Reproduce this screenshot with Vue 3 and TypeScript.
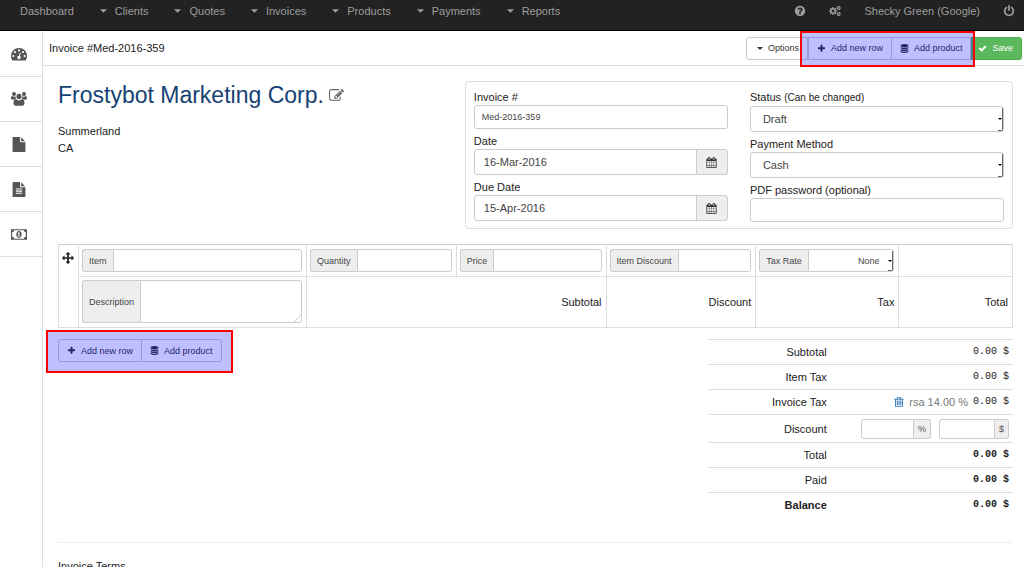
<script setup lang="ts">
import { h, ref } from 'vue'

function gear(cx: number, cy: number, outer: number, teeth: number, hole: number): string {
  const inner = outer * 0.76
  const step = (Math.PI * 2) / teeth
  const at = (radius: number, angle: number): string =>
    `${(cx + radius * Math.cos(angle)).toFixed(2)} ${(cy + radius * Math.sin(angle)).toFixed(2)}`
  const points: string[] = []
  for (let i = 0; i < teeth; i++) {
    const a = i * step
    points.push(at(inner, a - step * 0.28), at(outer, a - step * 0.18), at(outer, a + step * 0.18), at(inner, a + step * 0.28))
  }
  return `M${points.join('L')}Z` + disc(cx, cy, hole)
}

function disc(cx: number, cy: number, r: number): string {
  return `M${cx - r} ${cy}a${r} ${r} 0 1 0 ${2 * r} 0a${r} ${r} 0 1 0 ${-2 * r} 0z`
}

interface Glyph { box: string; d: string }

const glyphs: Record<string, Glyph> = {
  help: { box: '0 0 1792 1792', d: 'M1024 1376v-192q0-14-9-23t-23-9h-192q-14 0-23 9t-9 23v192q0 14 9 23t23 9h192q14 0 23-9t9-23zm256-672q0-88-55.5-163t-138.5-116-170-41q-243 0-371 213-15 24 8 42l132 100q7 6 19 6 16 0 25-12 53-68 86-92 34-24 86-24 48 0 85.5 26t37.5 59q0 38-20 61t-68 45q-63 28-115.5 86.5t-52.5 125.5v36q0 14 9 23t23 9h192q14 0 23-9t9-23q0-19 21.5-49.5t54.5-49.5q32-18 49-28.5t46-35 44.5-48 28-60.5 12.5-81zm384 192q0 209-103 385.5t-279.5 279.5-385.5 103-385.5-103-279.5-279.5-103-385.5 103-385.5 279.5-279.5 385.5-103 385.5 103 279.5 279.5 103 385.5z' },
  power: { box: '0 0 1792 1792', d: 'M1664 896q0 156-61 298t-164 245-245 164-298 61-298-61-245-164-164-245-61-298q0-182 80.5-343t226.5-270q43-32 95.5-25t83.5 50q32 42 24.5 94.5t-49.5 84.5q-98 74-151.5 181t-53.5 228q0 104 40.5 198.5t109.5 163.5 163.5 109.5 198.5 40.5 198.5-40.5 163.5-109.5 109.5-163.5 40.5-198.5q0-121-53.5-228t-151.5-181q-42-32-49.5-84.5t24.5-94.5q31-43 84-50t95 25q146 109 226.5 270t80.5 343zm-640-768v640q0 52-38 90t-90 38-90-38-38-90v-640q0-52 38-90t90-38 90 38 38 90z' },
  plus: { box: '0 0 1792 1792', d: 'M1600 736v192q0 40-28 68t-68 28h-416v416q0 40-28 68t-68 28h-192q-40 0-68-28t-28-68v-416h-416q-40 0-68-28t-28-68v-192q0-40 28-68t68-28h416v-416q0-40 28-68t68-28h192q40 0 68 28t28 68v416h416q40 0 68 28t28 68z' },
  check: { box: '0 0 1792 1792', d: 'M1671 566q0 40-28 68l-724 724-136 136q-28 28-68 28t-68-28l-136-136-362-362q-28-28-28-68t28-68l136-136q28-28 68-28t68 28l294 295 656-657q28-28 68-28t68 28l136 136q28 28 28 68z' },
  database: { box: '0 0 1792 1792', d: 'M896 768q237 0 443-43t325-127v170q0 69-103 128t-280 93.5-385 34.5-385-34.5-280-93.5-103-128v-170q119 84 325 127t443 43zm0 768q237 0 443-43t325-127v170q0 69-103 128t-280 93.5-385 34.5-385-34.5-280-93.5-103-128v-170q119 84 325 127t443 43zm0-384q237 0 443-43t325-127v170q0 69-103 128t-280 93.5-385 34.5-385-34.5-280-93.5-103-128v-170q119 84 325 127t443 43zm0-1152q208 0 385 34.5t280 93.5 103 128v128q0 69-103 128t-280 93.5-385 34.5-385-34.5-280-93.5-103-128v-128q0-69 103-128t280-93.5 385-34.5z' },
  arrows: { box: '0 0 1792 1792', d: 'M1792 896q0 26-19 45l-256 256q-19 19-45 19t-45-19-19-45v-128h-384v384h128q26 0 45 19t19 45-19 45l-256 256q-19 19-45 19t-45-19l-256-256q-19-19-19-45t19-45 45-19h128v-384h-384v128q0 26-19 45t-45 19-45-19l-256-256q-19-19-19-45t19-45l256-256q19-19 45-19t45 19 19 45v128h384v-384h-128q-26 0-45-19t-19-45 19-45l256-256q19-19 45-19t45 19l256 256q19 19 19 45t-19 45-45 19h-128v384h384v-128q0-26 19-45t45-19 45 19l256 256q19 19 19 45z' },
  calendar: { box: '0 0 1792 1792', d: 'M192 1664h288v-288h-288v288zm352 0h320v-288h-320v288zm-352-352h288v-320h-288v320zm352 0h320v-320h-320v320zm-352-384h288v-288h-288v288zm736 736h320v-288h-320v288zm-384-736h320v-288h-320v288zm768 736h288v-288h-288v288zm-384-352h320v-320h-320v320zm-352-864v-288q0-13-9.5-22.5t-22.5-9.5h-64q-13 0-22.5 9.5t-9.5 22.5v288q0 13 9.5 22.5t22.5 9.5h64q13 0 22.5-9.5t9.5-22.5zm736 864h288v-320h-288v320zm-384-384h320v-288h-320v288zm384 0h288v-288h-288v288zm32-480v-288q0-13-9.5-22.5t-22.5-9.5h-64q-13 0-22.5 9.5t-9.5 22.5v288q0 13 9.5 22.5t22.5 9.5h64q13 0 22.5-9.5t9.5-22.5zm384-64v1280q0 52-38 90t-90 38h-1408q-52 0-90-38t-38-90v-1280q0-52 38-90t90-38h128v-96q0-66 47-113t113-47h64q66 0 113 47t47 113v96h384v-96q0-66 47-113t113-47h64q66 0 113 47t47 113v96h128q52 0 90 38t38 90z' },
  edit: { box: '0 0 1792 1792', d: 'M888 1184l116-116-152-152-116 116v56h96v96h56zm440-720q-16-16-33 1l-350 350q-17 17-1 33t33-1l350-350q17-17 1-33zm80 594v190q0 119-84.5 203.5t-203.5 84.5h-832q-119 0-203.5-84.5t-84.5-203.5v-832q0-119 84.5-203.5t203.5-84.5h832q63 0 117 25 15 7 18 23 3 17-9 29l-49 49q-14 14-32 8-23-6-45-6h-832q-66 0-113 47t-47 113v832q0 66 47 113t113 47h832q66 0 113-47t47-113v-126q0-13 9-22l64-64q15-15 35-7t20 29zm-96-738l288 288-672 672h-288v-288zm444 132l-92 92-288-288 92-92q28-28 68-28t68 28l152 152q28 28 28 68t-28 68z' },
  file: { box: '0 0 1792 1792', d: 'M1152 512v-472q22 14 36 28l408 408q14 14 28 36h-472zm-128 32q0 40 28 68t68 28h544v1056q0 40-28 68t-68 28h-1344q-40 0-68-28t-28-68v-1600q0-40 28-68t68-28h800v544z' },
  fileText: { box: '0 0 1792 1792', d: 'M1596 476q14 14 28 36h-472v-472q22 14 36 28zm-476 164h544v1056q0 40-28 68t-68 28h-1344q-40 0-68-28t-28-68v-1600q0-40 28-68t68-28h800v544q0 40 28 68t68 28zm160 736v-64q0-14-9-23t-23-9h-704q-14 0-23 9t-9 23v64q0 14 9 23t23 9h704q14 0 23-9t9-23zm0-256v-64q0-14-9-23t-23-9h-704q-14 0-23 9t-9 23v64q0 14 9 23t23 9h704q14 0 23-9t9-23zm0-256v-64q0-14-9-23t-23-9h-704q-14 0-23 9t-9 23v64q0 14 9 23t23 9h704q14 0 23-9t9-23z' },
  dashboard: { box: '0 0 16 16', d: 'M8 2a8 8 0 0 0-8 8c0 1.600.5 3 1.200 4.200.2.3.4.4.7.4h12.200c.3 0 .5-.1.7-.4A8 8 0 0 0 8 2z' + disc(2.3, 10, 1.1) + disc(4, 6, 1.1) + disc(8, 4.3, 1.1) + disc(12, 6, 1.1) + disc(13.7, 10, 1.1) + 'M8.900 6.500l.9.250-.9 3.300a1.700 1.700 0 1 1-.95-.25z' },
  users: { box: '0 0 16 16', d: disc(8, 5.4, 2.6) + disc(3, 3, 2) + disc(13, 3, 2) + 'M4.900 8.100c.8.9 1.900 1.300 3.100 1.300s2.300-.4 3.100-1.300c1.600.1 2.400 1.700 2.400 4.200 0 1.600-.9 2.500-2.300 2.500H4.800c-1.400 0-2.300-.9-2.300-2.500 0-2.500.8-4.100 2.400-4.200zM1.200 5c.6.5 1.200.7 1.800.7.5 0 1-.1 1.500-.4 0 1 .2 1.600.6 2.300-.9 0-1.700.4-2.300 1.100H1.600C.6 8.700 0 8.200 0 7.300 0 6.100.3 5 1.200 5zM14.800 5c-.6.5-1.200.7-1.800.7-.5 0-1-.1-1.500-.4 0 1-.2 1.600-.6 2.300.9 0 1.700.4 2.300 1.100h1.200c1 0 1.600-.5 1.600-1.400 0-1.200-.3-2.300-1.200-2.300z' },
  money: { box: '0 0 18 12', d: 'M0 0h18v12H0zM3.500 1.300A2.300 2.300 0 0 1 1.300 3.500v5a2.300 2.300 0 0 1 2.200 2.200h11a2.300 2.300 0 0 1 2.200-2.200v-5a2.300 2.300 0 0 1-2.200-2.200zM9 2.200c1.900 0 3 1.700 3 3.800s-1.100 3.800-3 3.800S6 8.100 6 6s1.100-3.800 3-3.800zM8.600 3.600L7.300 4.700l.6.7.5-.4v2.300h-.9v1h3v-1h-.9V3.600z' },
  cogs: { box: '0 0 16 16', d: gear(5.4, 8, 5.4, 8, 2) + gear(13, 4, 3, 6, 1) + gear(13, 12, 3, 6, 1) },
  trash: { box: '0 0 12 12', d: 'M4 0h4l1 2h2.500v1.200H10.700V11c0 .6-.4 1-1 1H2.300c-.6 0-1-.4-1-1V3.200H.5V2H3zM4.700 1l-.4 1h3.400l-.4-1zM2.400 3.200V11h7.200V3.200zM3.300 4.300h1.300v5.700H3.300zM5.400 4.300h1.300v5.700H5.400zM7.500 4.300h1.300v5.700H7.500z' },
  caret: { box: '0 0 8 4', d: 'M0 0h8L4 4z' },
}

const Icon = (props: { name: string }) =>
  h('svg', { viewBox: glyphs[props.name].box, fill: 'currentColor', 'aria-hidden': 'true' }, [
    h('path', { d: glyphs[props.name].d, 'fill-rule': 'evenodd' }),
  ])
Icon.props = ['name']

const menus: string[] = ['Clients', 'Quotes', 'Invoices', 'Products', 'Payments', 'Reports']
const shortcuts: { icon: string; label: string }[] = [
  { icon: 'dashboard', label: 'Dashboard' },
  { icon: 'users', label: 'Clients' },
  { icon: 'file', label: 'Quotes' },
  { icon: 'fileText', label: 'Invoices' },
  { icon: 'money', label: 'Payments' },
]

const invoiceNumber = ref('Med-2016-359')
const invoiceDate = ref('16-Mar-2016')
const dueDate = ref('15-Apr-2016')
const status = ref('Draft')
const method = ref('Cash')
const taxRate = ref('None')
</script>

<template>
  <div class="page">
    <nav class="topbar">
      <a href="#" class="nav-link">Dashboard</a>
      <a v-for="menu in menus" :key="menu" href="#" class="nav-link">
        <Icon name="caret" class="nav-caret" />{{ menu }}
      </a>
      <div class="account">
        <a href="#" class="nav-link" aria-label="Help"><Icon name="help" class="icon-nav" /></a>
        <a href="#" class="nav-link" aria-label="Settings"><Icon name="cogs" class="icon-nav" /></a>
        <a href="#" class="nav-link">Shecky Green (Google)</a>
        <a href="#" class="nav-link" aria-label="Log out"><Icon name="power" class="icon-nav" /></a>
      </div>
    </nav>

    <div class="body">
      <aside class="sidebar">
        <a v-for="item in shortcuts" :key="item.icon" href="#" class="side-link" :aria-label="item.label">
          <Icon :name="item.icon" :class="['side-icon', item.icon]" />
        </a>
      </aside>

      <main class="main">
        <header class="toolbar">
          <h1 class="page-title">Invoice #Med-2016-359</h1>
          <div class="actions">
            <button type="button" class="btn options"><Icon name="caret" class="btn-caret" />Options</button>
            <div class="group top-group">
              <button type="button" class="btn"><Icon name="plus" class="btn-icon" />Add new row</button>
              <button type="button" class="btn"><Icon name="database" class="btn-icon" />Add product</button>
              <span class="highlight"></span>
            </div>
            <button type="button" class="btn save"><Icon name="check" class="btn-icon" />Save</button>
          </div>
        </header>

        <div class="content">
          <section class="summary">
            <div class="client">
              <h2 class="client-name">
                <a href="#">Frostybot Marketing Corp.</a>
                <button type="button" class="edit" aria-label="Edit client"><Icon name="edit" class="edit-icon" /></button>
              </h2>
              <address>Summerland<br />CA</address>
            </div>

            <div class="panel">
              <div class="column">
                <div class="field">
                  <label for="number">Invoice #</label>
                  <input id="number" v-model="invoiceNumber" class="control small" type="text" />
                </div>
                <div class="field">
                  <label for="date">Date</label>
                  <div class="date-group">
                    <input id="date" v-model="invoiceDate" class="control" type="text" />
                    <button type="button" class="date-button" aria-label="Pick date"><Icon name="calendar" class="calendar" /></button>
                  </div>
                </div>
                <div class="field">
                  <label for="due">Due Date</label>
                  <div class="date-group">
                    <input id="due" v-model="dueDate" class="control" type="text" />
                    <button type="button" class="date-button" aria-label="Pick due date"><Icon name="calendar" class="calendar" /></button>
                  </div>
                </div>
              </div>
              <div class="column">
                <div class="field">
                  <label for="status">Status <small>(Can be changed)</small></label>
                  <div class="picker">
                    <select id="status" v-model="status" class="control"><option>Draft</option><option>Sent</option></select>
                  </div>
                </div>
                <div class="field">
                  <label for="method">Payment Method</label>
                  <div class="picker">
                    <select id="method" v-model="method" class="control"><option>Cash</option><option>Credit Card</option></select>
                  </div>
                </div>
                <div class="field">
                  <label for="password">PDF password (optional)</label>
                  <input id="password" class="control small" type="text" />
                </div>
              </div>
            </div>
          </section>

          <table class="items">
            <colgroup>
              <col class="c-move" /><col class="c-item" /><col class="c-mid" /><col class="c-mid" /><col class="c-mid" /><col class="c-tax" /><col />
            </colgroup>
            <tbody>
              <tr>
                <td rowspan="2" class="move"><Icon name="arrows" class="move-icon" /></td>
                <td><div class="addon-group"><label for="item">Item</label><input id="item" type="text" /></div></td>
                <td><div class="addon-group"><label for="qty">Quantity</label><input id="qty" type="text" /></div></td>
                <td><div class="addon-group"><label for="price">Price</label><input id="price" type="text" /></div></td>
                <td><div class="addon-group"><label for="idisc">Item Discount</label><input id="idisc" type="text" /></div></td>
                <td>
                  <div class="addon-group">
                    <label for="rate">Tax Rate</label>
                    <div class="picker">
                      <select id="rate" v-model="taxRate"><option>None</option><option>rsa</option></select>
                    </div>
                  </div>
                </td>
                <td></td>
              </tr>
              <tr>
                <td><div class="addon-group tall"><label for="desc">Description</label><textarea id="desc"></textarea></div></td>
                <td colspan="2" class="amount">Subtotal</td>
                <td class="amount">Discount</td>
                <td class="amount">Tax</td>
                <td class="amount">Total</td>
              </tr>
            </tbody>
          </table>

          <section class="footer">
            <div class="group bottom-group">
              <button type="button" class="btn"><Icon name="plus" class="btn-icon" />Add new row</button>
              <button type="button" class="btn"><Icon name="database" class="btn-icon" />Add product</button>
              <span class="highlight"></span>
            </div>

            <table class="totals">
              <tbody>
                <tr><th scope="row">Subtotal</th><td class="mono">0.00 $</td></tr>
                <tr><th scope="row">Item Tax</th><td class="mono">0.00 $</td></tr>
                <tr>
                  <th scope="row">Invoice Tax</th>
                  <td>
                    <div class="tax-line">
                      <button type="button" class="trash" aria-label="Remove tax"><Icon name="trash" class="trash-icon" /></button>
                      <span class="muted">rsa 14.00 %</span>
                      <span class="mono">0.00 $</span>
                    </div>
                  </td>
                </tr>
                <tr class="discount-row">
                  <th scope="row">Discount</th>
                  <td>
                    <div class="discounts">
                      <div class="unit-group"><input id="dpct" type="text" /><label for="dpct">%</label></div>
                      <div class="unit-group"><input id="damt" type="text" /><label for="damt">$</label></div>
                    </div>
                  </td>
                </tr>
                <tr><th scope="row">Total</th><td class="mono strong">0.00 $</td></tr>
                <tr><th scope="row">Paid</th><td class="mono strong">0.00 $</td></tr>
                <tr><th scope="row" class="strong">Balance</th><td class="mono strong">0.00 $</td></tr>
              </tbody>
            </table>
          </section>

          <hr />
          <h3 class="terms">Invoice Terms</h3>
        </div>
      </main>
    </div>
  </div>
</template>

<style>
html {
  scrollbar-width: none;
}
body {
  background: #fff;
}
</style>

<style scoped>
.page {
  font-family: 'Liberation Sans', Arial, sans-serif;
  font-size: 11px;
  line-height: 16px;
  color: #222;
  min-height: 100vh;
  display: flex;
  flex-direction: column;
}
.page *,
.page *::before,
.page *::after {
  box-sizing: border-box;
}
button,
input,
select,
textarea {
  font-family: inherit;
  font-size: 11px;
  margin: 0;
}
input,
select,
textarea {
  color: #444;
  background: #fff;
  border: 1px solid #ccc;
  border-radius: 3px;
  outline: none;
  min-width: 0;
}
select {
  appearance: none;
}
textarea::-webkit-resizer {
  background: linear-gradient(135deg, transparent 75%, #ccc 75%, #ccc 80%, transparent 80%);
}
svg {
  display: block;
  flex: none;
}

.topbar {
  display: flex;
  align-items: center;
  gap: 26px;
  padding: 3px 9px 11px 20px;
  background: #222;
  border-bottom: 1px solid #080808;
}
.nav-link {
  display: flex;
  align-items: center;
  color: #9d9d9d;
  text-decoration: none;
}
.nav-caret {
  width: 7px;
  height: 4px;
  margin-right: 8px;
}
.account {
  display: flex;
  align-items: center;
  gap: 23px;
  margin-left: auto;
}
.icon-nav {
  width: 12px;
  height: 12px;
}

.body {
  display: flex;
  flex: 1;
}
.sidebar {
  width: 43px;
  flex: none;
  padding-top: 1px;
  border-right: 1px solid #ddd;
}
.side-link {
  display: flex;
  align-items: center;
  height: 45px;
  padding-left: 11px;
  border-bottom: 1px solid #ddd;
  color: #555;
}
.side-icon {
  width: 16px;
  height: 16px;
}
.side-icon.file,
.side-icon.fileText {
  height: 15px;
}
.side-icon.money {
  height: 11px;
}

.main {
  flex: 1;
  min-width: 0;
}
.toolbar {
  display: flex;
  align-items: center;
  justify-content: space-between;
  height: 35px;
  padding: 0 2px 0 6px;
  border-bottom: 1px solid #ddd;
}
.page-title {
  margin: 0;
  font-size: 11px;
  font-weight: normal;
}
.actions,
.group {
  display: flex;
}
.btn {
  display: flex;
  align-items: center;
  justify-content: center;
  gap: 5px;
  height: 23px;
  padding: 0 8px;
  border: 1px solid #ccc;
  background: #fff;
  color: #333;
  font-size: 9px;
  white-space: nowrap;
}
.btn-icon {
  width: 9px;
  height: 9px;
}
.btn-caret {
  width: 6px;
  height: 3px;
}
.options {
  border-radius: 3px 0 0 3px;
  padding: 0 8px 0 10px;
}
.save {
  background: #5cb85c;
  border-color: #4cae4c;
  border-radius: 0 3px 3px 0;
  color: #fff;
  padding: 0 8px 0 6px;
}
.group {
  position: relative;
}
.group .btn + .btn {
  margin-left: -1px;
}
.bottom-group .btn:first-child {
  border-radius: 3px 0 0 3px;
}
.bottom-group .btn:nth-child(2) {
  border-radius: 0 3px 3px 0;
}
.highlight {
  position: absolute;
  z-index: 1;
  inset: -6px -4px -7px -8px;
  border: 2px solid #f00;
  background: rgba(0, 0, 255, 0.25);
  pointer-events: none;
}
.bottom-group .highlight {
  inset: -9px -11px -11px -12px;
}

.content {
  padding: 15px 11px 0 15px;
}
.summary {
  display: flex;
  align-items: flex-start;
}
.client {
  flex: 1;
  padding-top: 1px;
}
.client-name {
  display: flex;
  align-items: baseline;
  gap: 5px;
  margin: 0 0 15px;
  font-size: 23px;
  line-height: 26px;
  font-weight: normal;
}
.client-name a {
  color: #164276;
  text-decoration: none;
}
.edit,
.trash {
  padding: 0;
  border: 0;
  background: none;
  color: #666;
}
.edit-icon {
  width: 15px;
  height: 15px;
}
address {
  font-style: normal;
  line-height: 17px;
}
.panel {
  display: flex;
  gap: 22px;
  width: 57.4%;
  padding: 7px 8px 6px;
  border: 1px solid #ddd;
  border-radius: 4px;
}
.column {
  flex: 1;
  min-width: 0;
  display: flex;
  flex-direction: column;
  gap: 4px;
}
.field label {
  display: block;
}
small {
  font-size: 10px;
}
.control {
  display: block;
  width: 100%;
  height: 26px;
  padding: 0 9px;
}
.control.small {
  height: 24px;
  padding: 0 7px;
  font-size: 9px;
}
select.control {
  padding: 0 12px;
}
.date-group {
  display: flex;
}
.date-group .control {
  border-radius: 3px 0 0 3px;
}
.date-button {
  display: flex;
  align-items: center;
  justify-content: center;
  flex: none;
  width: 32px;
  margin-left: -1px;
  padding: 0;
  border: 1px solid #ccc;
  border-radius: 0 3px 3px 0;
  background: #eee;
  color: #333;
}
.calendar {
  width: 11px;
  height: 11px;
}
.picker {
  position: relative;
}
.picker::before {
  content: '';
  position: absolute;
  top: 2px;
  right: 1px;
  bottom: 1px;
  width: 5px;
  border: solid #666;
  border-width: 0 1px 1px 0;
  border-radius: 0 0 2px 0;
  pointer-events: none;
}
.picker::after {
  content: '';
  position: absolute;
  top: calc(50% - 1px);
  right: 2px;
  border: 2px solid transparent;
  border-top-color: #000;
  pointer-events: none;
}

.items {
  width: 100%;
  margin-top: 15px;
  table-layout: fixed;
  border-collapse: collapse;
}
.items td {
  padding: 3px 4px 4px 3px;
  border: 1px solid #ddd;
}
.items tr:first-child td {
  padding-top: 4px;
  border-top-color: #ccc;
}
.c-move { width: 20px; }
.c-item { width: 23.9%; }
.c-mid { width: 15.7%; }
.c-tax { width: 15%; }
.items tr:first-child .move {
  vertical-align: top;
  padding-top: 7px;
}
.move-icon {
  width: 12px;
  height: 12px;
}
.items .amount {
  text-align: right;
}
.addon-group {
  display: flex;
  height: 23px;
}
.addon-group.tall {
  height: 43px;
}
.addon-group label {
  display: flex;
  align-items: center;
  flex: none;
  padding: 0 6px;
  border: 1px solid #ccc;
  border-right: 0;
  border-radius: 3px 0 0 3px;
  background: #eee;
  color: #444;
  font-size: 9px;
}
.addon-group input,
.addon-group textarea,
.addon-group select {
  width: 100%;
  height: 100%;
  border-radius: 0 3px 3px 0;
  font-size: 9px;
}
.addon-group .picker {
  flex: 1;
  min-width: 0;
}
.addon-group select {
  padding: 0 14px 0 0;
  text-align: right;
  text-align-last: right;
}

.footer {
  display: flex;
  align-items: flex-start;
  justify-content: space-between;
  padding-top: 11px;
}
.totals {
  width: 31.8%;
  border-collapse: collapse;
}
.totals tr {
  height: 25px;
  border-top: 1px solid #ddd;
}
.totals .discount-row {
  height: 28px;
}
.totals th,
.totals td {
  padding: 0 4px;
  text-align: right;
  font-weight: normal;
}
.totals th {
  width: 40%;
}
.mono {
  font-family: 'Liberation Mono', monospace;
  font-size: 10px;
}
.totals .strong {
  font-weight: bold;
}
.tax-line,
.discounts {
  display: flex;
  align-items: center;
  justify-content: flex-end;
  gap: 5px;
}
.discounts {
  gap: 8px;
}
.muted {
  color: #777;
}
.trash {
  color: #337ab7;
}
.trash-icon {
  width: 10px;
  height: 10px;
}
.unit-group {
  display: flex;
  width: 70px;
  height: 20px;
}
.unit-group input {
  flex: 1;
  border-radius: 3px 0 0 3px;
}
.unit-group label {
  display: flex;
  align-items: center;
  padding: 0 4px;
  border: 1px solid #ccc;
  border-left: 0;
  border-radius: 0 3px 3px 0;
  background: #eee;
  color: #555;
  font-size: 9px;
}
hr {
  margin: 24px 0 15px;
  border: 0;
  border-top: 1px solid #eee;
}
.terms {
  margin: 0;
  font-size: 11px;
  font-weight: normal;
}
</style>
